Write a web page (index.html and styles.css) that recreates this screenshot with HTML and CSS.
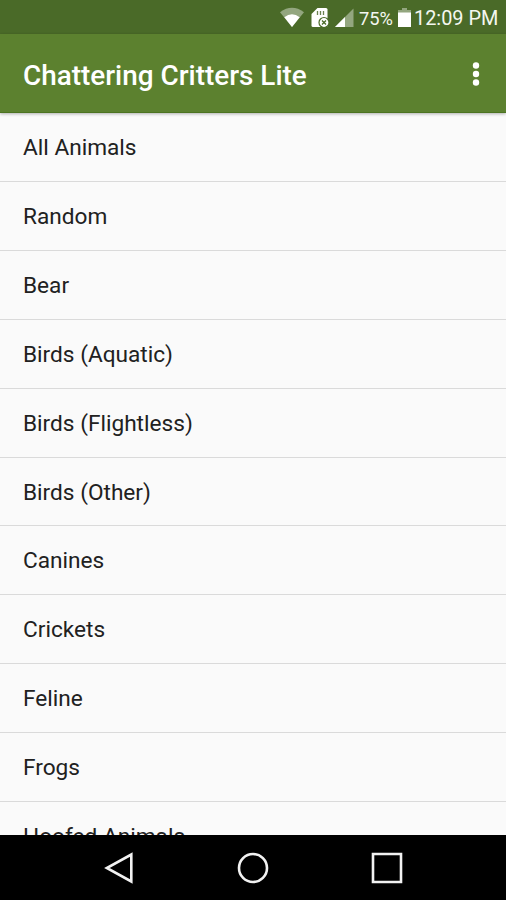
FILE: index.html
```html
<!DOCTYPE html>
<html lang="en">
<head>
<meta charset="utf-8">
<title>Chattering Critters Lite</title>
<link rel="stylesheet" href="styles.css">
</head>
<body>
<div class="screen">
  <div class="status">
    <svg class="status-icons" width="78" height="34" viewBox="0 0 78 34">
      <path class="dim" d="M0 12.2Q12 3.5 24 12.2L12 27Z"/>
      <path class="lit" d="M4.3 17.2Q12 11.2 19.7 17.2L12 27Z"/>
      <path class="lit" d="M37.5 8H46q1.5 0 1.5 1.5V27H33q-1.500 0-1.500-1.500V14Z"/>
      <path class="slot" d="M37.5 11v4M40.500 11v4M43.500 11v4"/>
      <circle class="badge" cx="44" cy="22.500" r="5"/>
      <path class="cross" d="M42 20.500l4 4M46 20.500l-4 4"/>
      <path class="dim" d="M73.500 8.500V27H55Z"/>
      <path class="lit" d="M65 17V27H55Z"/>
    </svg>
    <span class="percent">75%</span>
    <svg class="battery" width="13" height="34" viewBox="0 0 13 34">
      <path class="dim" d="M4 8h5v2h4v4H0v-4h4Z"/>
      <path class="lit" d="M0 12.500h13V27H0Z"/>
    </svg>
    <span class="clock">12:09 PM</span>
  </div>
  <header class="appbar">
    <h1 class="title">Chattering Critters Lite</h1>
    <svg class="more" width="10" height="26" viewBox="0 0 10 26">
      <circle class="lit" cx="5" cy="4.500" r="3.200"/>
      <circle class="lit" cx="5" cy="13" r="3.200"/>
      <circle class="lit" cx="5" cy="21.500" r="3.200"/>
    </svg>
  </header>
  <ul class="list">
    <li class="row">All Animals</li>
    <li class="row">Random</li>
    <li class="row">Bear</li>
    <li class="row">Birds (Aquatic)</li>
    <li class="row">Birds (Flightless)</li>
    <li class="row">Birds (Other)</li>
    <li class="row">Canines</li>
    <li class="row">Crickets</li>
    <li class="row">Feline</li>
    <li class="row">Frogs</li>
    <li class="row">Hoofed Animals</li>
  </ul>
  <nav class="navbar">
    <svg class="nav-icon" width="34" height="34" viewBox="0 0 34 34"><path d="M29.300 3.500V30.500L4.800 17Z"/></svg>
    <svg class="nav-icon" width="34" height="34" viewBox="0 0 34 34"><circle cx="17" cy="17" r="14"/></svg>
    <svg class="nav-icon" width="34" height="34" viewBox="0 0 34 34"><path d="M3 3H31V31H3Z"/></svg>
  </nav>
</div>
</body>
</html>
```
FILE: styles.css
```css
body {
  margin: 0;
  font-family: Roboto, "Liberation Sans", sans-serif;
}

.screen {
  display: flex;
  flex-direction: column;
  width: 506px;
  height: 900px;
  overflow: hidden;
  background: #fafafa;
}

.status {
  display: flex;
  flex: none;
  justify-content: flex-end;
  align-items: center;
  height: 34px;
  padding-right: 8px;
  background: #4a6a28;
  color: #f4f7f0;
  font-size: 19.9px;
  line-height: 24px;
  white-space: nowrap;
}

.status-icons {
  margin-right: 1px;
}

.percent {
  width: 35px;
  margin-top: 3px;
  font-size: 18.3px;
}

.battery {
  margin: 0 3px 0 4px;
}

.clock {
  width: 84px;
  margin-top: 4px;
}

.lit {
  fill: #fff;
}

.dim {
  fill: #93a67f;
}

.slot {
  stroke: #6b8350;
  stroke-width: 1.3;
}

.badge {
  fill: #fff;
  stroke: #4a6a28;
  stroke-width: 1.2;
}

.cross {
  stroke: #4a6a28;
  stroke-width: 1.3;
}

.appbar {
  display: flex;
  flex: none;
  justify-content: space-between;
  align-items: center;
  box-sizing: border-box;
  height: 79px;
  padding: 0 25px 0 23px;
  border-bottom: 1px solid #4c7421;
  background: #5c812f;
  box-shadow: 0 1px 3px rgba(0, 0, 0, 0.3);
  z-index: 1;
}

.title {
  margin: 5px 0 0;
  color: #fff;
  font-size: 27.9px;
  font-weight: 500;
  line-height: 34px;
  white-space: nowrap;
}

.more {
  margin-top: 1px;
}

.list {
  flex: 1;
  min-height: 0;
  margin: 0;
  padding: 0;
  overflow: hidden;
  list-style: none;
}

.row {
  box-sizing: border-box;
  height: 68.92px;
  padding-left: 23px;
  border-bottom: 1px solid #dadada;
  color: #212121;
  font-size: 22.65px;
  line-height: 69.6px;
}

.navbar {
  display: flex;
  flex: none;
  justify-content: center;
  align-items: center;
  gap: 100px;
  box-sizing: border-box;
  height: 65px;
  padding-top: 1px;
  background: #000;
}

.nav-icon {
  fill: none;
  stroke: #f2f2f2;
  stroke-width: 2.6;
}
```
